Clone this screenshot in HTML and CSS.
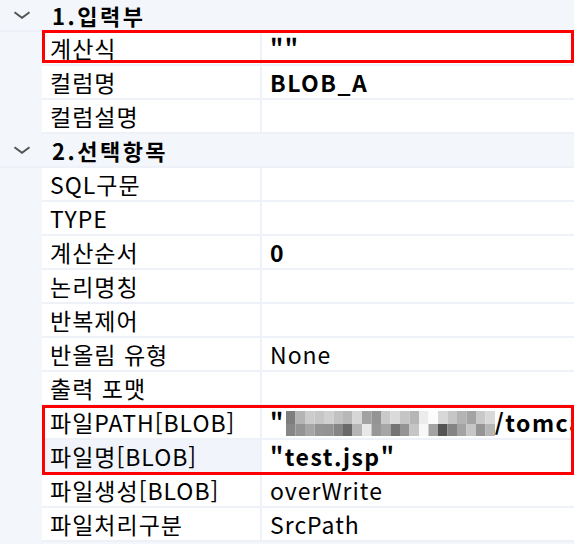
FILE: index.html
```html
<!DOCTYPE html>
<html lang="ko">
<head>
<meta charset="utf-8">
<title>Property Grid</title>
<link rel="stylesheet" href="styles.css">
</head>
<body>
<div class="grid">
  <div class="cat cat-first">
    <span class="chev"><svg width="18" height="8" viewBox="0 0 18 8"><path d="M1.5 1.2 L9 6.8 L16.5 1.2" fill="none" stroke="#555" stroke-width="2"/></svg></span>
    <span class="cat-label">1.입력부</span>
  </div>
  <div class="items">
    <div class="row hl hl-one"><div class="name">계산식</div><div class="val b">""</div></div>
    <div class="row"><div class="name">컬럼명</div><div class="val b">BLOB_A</div></div>
    <div class="row"><div class="name">컬럼설명</div><div class="val"></div></div>
  </div>
  <div class="cat">
    <span class="chev"><svg width="18" height="8" viewBox="0 0 18 8"><path d="M1.5 1.2 L9 6.8 L16.5 1.2" fill="none" stroke="#555" stroke-width="2"/></svg></span>
    <span class="cat-label">2.선택항목</span>
  </div>
  <div class="items">
    <div class="row"><div class="name">SQL구문</div><div class="val"></div></div>
    <div class="row"><div class="name">TYPE</div><div class="val"></div></div>
    <div class="row"><div class="name">계산순서</div><div class="val b">0</div></div>
    <div class="row"><div class="name">논리명칭</div><div class="val"></div></div>
    <div class="row"><div class="name">반복제어</div><div class="val"></div></div>
    <div class="row"><div class="name">반올림 유형</div><div class="val">None</div></div>
    <div class="row"><div class="name">출력 포맷</div><div class="val"></div></div>
    <div class="hl hl-group">
      <div class="row"><div class="name">파일PATH[BLOB]</div><div class="val b clip">"<svg class="mosaic" width="209" height="25" viewBox="0 0 209 25">
        <rect x="0" y="0" width="9.5" height="13" fill="#7e7e7e"/><rect x="9.5" y="0" width="9.5" height="13" fill="#b4b4b4"/><rect x="19" y="0" width="9.5" height="13" fill="#cccccc"/><rect x="28.5" y="0" width="9.5" height="13" fill="#c6c6c6"/><rect x="38" y="0" width="9.5" height="13" fill="#d0d0d0"/><rect x="47.5" y="0" width="9.5" height="13" fill="#c2c2c2"/><rect x="57" y="0" width="9.5" height="13" fill="#b8b8b8"/><rect x="66.5" y="0" width="9.5" height="13" fill="#d6d6d6"/><rect x="76" y="0" width="9.5" height="13" fill="#a2a2a2"/><rect x="85.5" y="0" width="9.5" height="13" fill="#949494"/><rect x="95" y="0" width="9.5" height="13" fill="#c9c9c9"/><rect x="104.5" y="0" width="9.5" height="13" fill="#dadada"/><rect x="114" y="0" width="9.5" height="13" fill="#c5c5c5"/><rect x="123.5" y="0" width="9.5" height="13" fill="#b6b6b6"/><rect x="133" y="0" width="9.5" height="13" fill="#ececec"/><rect x="142.5" y="0" width="9.5" height="13" fill="#fcfcfc"/><rect x="152" y="0" width="9.5" height="13" fill="#d8d8d8"/><rect x="161.5" y="0" width="9.5" height="13" fill="#c6c6c6"/><rect x="171" y="0" width="9.5" height="13" fill="#b3b3b3"/><rect x="180.5" y="0" width="9.5" height="13" fill="#a4a4a4"/><rect x="190" y="0" width="9.5" height="13" fill="#c9c9c9"/><rect x="199.5" y="0" width="9.5" height="13" fill="#d9d9d9"/>
        <rect x="0" y="13" width="9.5" height="12" fill="#878787"/><rect x="9.5" y="13" width="9.5" height="12" fill="#949494"/><rect x="19" y="13" width="9.5" height="12" fill="#a6a6a6"/><rect x="28.5" y="13" width="9.5" height="12" fill="#959595"/><rect x="38" y="13" width="9.5" height="12" fill="#939393"/><rect x="47.5" y="13" width="9.5" height="12" fill="#858585"/><rect x="57" y="13" width="9.5" height="12" fill="#696969"/><rect x="66.5" y="13" width="9.5" height="12" fill="#b5b5b5"/><rect x="76" y="13" width="9.5" height="12" fill="#e8e8e8"/><rect x="85.5" y="13" width="9.5" height="12" fill="#979797"/><rect x="95" y="13" width="9.5" height="12" fill="#a6a6a6"/><rect x="104.5" y="13" width="9.5" height="12" fill="#747474"/><rect x="114" y="13" width="9.5" height="12" fill="#949494"/><rect x="123.5" y="13" width="9.5" height="12" fill="#c5c5c5"/><rect x="133" y="13" width="9.5" height="12" fill="#f7f7f7"/><rect x="142.5" y="13" width="9.5" height="12" fill="#a2a2a2"/><rect x="152" y="13" width="9.5" height="12" fill="#545454"/><rect x="161.5" y="13" width="9.5" height="12" fill="#848484"/><rect x="171" y="13" width="9.5" height="12" fill="#a3a3a3"/><rect x="180.5" y="13" width="9.5" height="12" fill="#c6c6c6"/><rect x="190" y="13" width="9.5" height="12" fill="#959595"/><rect x="199.5" y="13" width="9.5" height="12" fill="#b6b6b6"/>
      </svg>/tomcat/webapps/ROOT"</div></div>
      <div class="row sel"><div class="name">파일명[BLOB]</div><div class="val b">"test.jsp"</div></div>
    </div>
    <div class="row"><div class="name">파일생성[BLOB]</div><div class="val">overWrite</div></div>
    <div class="row"><div class="name">파일처리구분</div><div class="val">SrcPath</div></div>
  </div>
</div>
</body>
</html>
```

FILE: styles.css
```css
html, body {
  margin: 0;
  padding: 0;
}
body {
  background: #f3f6fb;
  width: 574px;
  height: 544px;
  overflow: hidden;
  font-family: "Noto Sans CJK KR", "Noto Sans", sans-serif;
  font-size: 23px;
  color: #000;
}
.cat {
  display: flex;
  align-items: center;
  height: 32px;
  border-bottom: 2px solid #eef2f8;
  background: #f3f6fb;
}
.cat-first {
  height: 30px;
}
.chev {
  width: 42px;
  display: flex;
  justify-content: center;
  align-items: center;
  padding-left: 1px;
  box-sizing: border-box;
}
.chev svg {
  display: block;
}
.cat-label {
  padding-left: 10px;
  font-weight: 700;
  font-size: 22px;
  letter-spacing: 2.5px;
  line-height: 32px;
}
.cat-first .cat-label {
  line-height: 30px;
}
.items {
  margin-left: 42px;
  background: #fff;
}
.row {
  display: grid;
  grid-template-columns: 220px 1fr;
  height: 32px;
  border-bottom: 2px solid #eef2f8;
  line-height: 32px;
}
.name {
  padding-left: 8px;
  border-right: 2px solid #eef2f8;
  white-space: nowrap;
  letter-spacing: 1px;
}
.val {
  padding-left: 8px;
  white-space: nowrap;
  letter-spacing: 1px;
}
.clip {
  overflow: hidden;
}
.b {
  font-weight: 700;
  letter-spacing: 1.5px;
}
.sel .name {
  background: #f1f5fb;
}
.mosaic {
  vertical-align: -4px;
  margin-left: 1px;
}
.hl {
  position: relative;
}
.hl::after {
  content: "";
  position: absolute;
  left: 0;
  right: 0;
  border: 3px solid #ff0000;
  pointer-events: none;
}
.hl-one::after {
  top: -2px;
  bottom: 1px;
}
.hl-group::after {
  top: -1px;
  bottom: -1px;
}
```
